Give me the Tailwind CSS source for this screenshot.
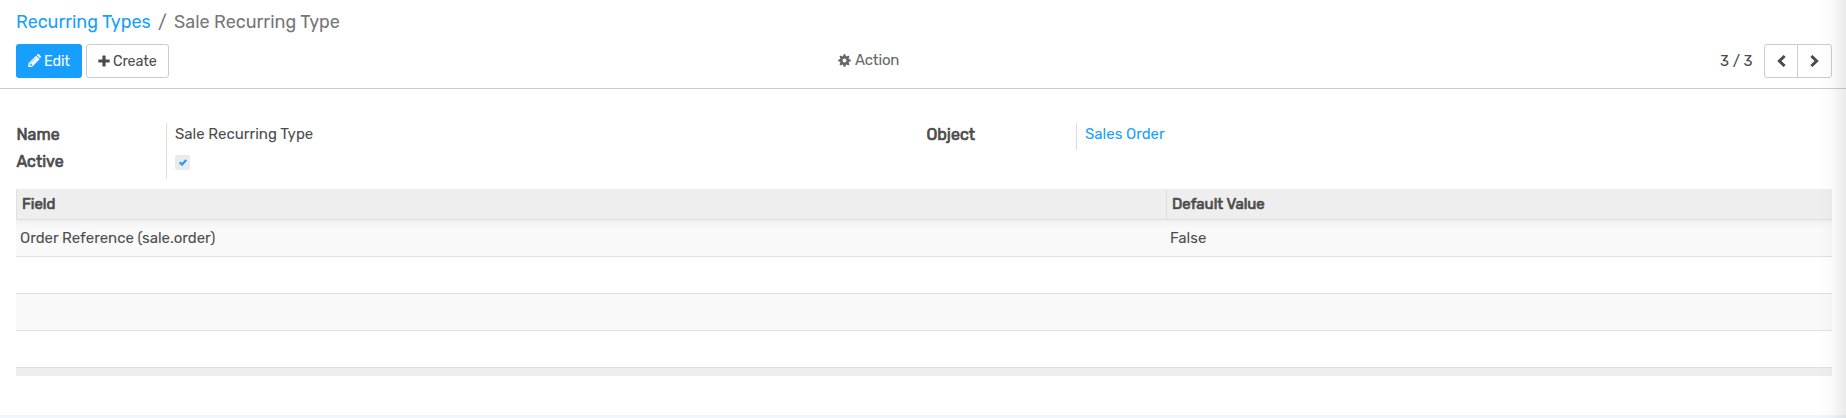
<!DOCTYPE html>
<html lang="en">
<head>
<meta charset="utf-8">
<title>Sale Recurring Type</title>
<script src="https://cdn.jsdelivr.net/npm/@tailwindcss/browser@4"></script>
</head>
<body class="relative h-[418px] overflow-hidden bg-white font-['Rubik','Roboto',sans-serif] text-[15px] leading-[22px] text-[#4c4c4c]">
<header class="h-[89px] border-b border-[#cccccc] px-4 pt-[11px]">
  <nav class="flex h-[33px] text-[18px] leading-[22px]">
    <a class="w-[142px] tracking-[-0.03px] text-[#169fff]">Recurring Types</a>
    <span class="w-4 text-[#777777]">/</span>
    <span class="text-[#777777]">Sale Recurring Type</span>
  </nav>
  <div class="grid h-[34px] grid-cols-[820px_1fr_auto]">
    <div class="flex gap-1">
      <button class="flex h-[34px] w-[66px] items-center rounded-[3px] bg-[#169fff] pl-3 text-[14.4px] tracking-[-0.15px] text-white">
        <svg class="mr-[3px] h-[14px] w-[13px]" viewBox="0 0 13 14" fill="currentColor"><path fill-rule="evenodd" d="M.3 9.4 8 1.7l3.6 3.6-7.7 7.7H.3zM1.5 10v.8h1.2V12h.9l.8-.8-2.100-2zM2.500 8.700l.4.4 5.300-5.300-.4-.4zM8.700 1l.8-.7q.7-.6 1.400 0l1.700 1.800q.6.7 0 1.400l-.8.8z"/></svg>
        <span class="pt-px">Edit</span>
      </button>
      <button class="flex h-[34px] w-[83px] items-center rounded-[3px] border border-[#cccccc] bg-white pl-[11px] text-[14.4px] tracking-[-0.15px]">
        <svg class="mr-[3px] h-3 w-3" viewBox="0 0 12 12" fill="currentColor"><path d="M5 .5h2q.6 0 .6.6v3.300h3.500q.6 0 .6.6v2q0 .6-.6.6H7.600v3.300q0 .6-.6.6H5q-.6 0-.6-.6V7.600H.9Q.3 7.600.3 7V5q0-.6.6-.6h3.500V1.100Q4.400.5 5 .5z"/></svg>
        <span class="pt-px">Create</span>
      </button>
    </div>
    <button class="flex h-8 items-center pl-[2px] text-[#666666]">
      <svg class="mr-1 h-[13px] w-[13px]" viewBox="0 0 13 13" fill="currentColor"><path fill-rule="evenodd" d="M5.500.3h2l.3 1.700.9.4L10.200 1.400l1.400 1.400-1 1.500.4.9 1.700.3v2l-1.700.3-.4.9 1 1.500-1.400 1.400-1.500-1-.9.4-.3 1.700h-2l-.3-1.700-.9-.4-1.500 1-1.400-1.400 1-1.500-.4-.9L.3 7.500v-2l1.700-.3.4-.9-1-1.500L2.800 1.400l1.500 1 .9-.4zM6.500 4.500a2 2 0 1 0 0 4 2 2 0 0 0 0-4z"/></svg>
      <span class="tracking-[-0.2px]">Action</span>
    </button>
    <div class="-mr-0.5 flex items-center">
      <span class="w-[44px]">3 / 3</span>
      <div class="flex">
        <button class="flex h-[34px] w-[34px] items-center justify-center rounded-l-[3px] border border-[#cccccc]"><svg class="h-3 w-[9px]" viewBox="0 0 9 12" fill="none" stroke="currentColor" stroke-width="3"><path d="M7.600 1 2.400 6l5.200 5"/></svg></button>
        <button class="-ml-px flex h-[34px] w-[35px] items-center justify-center rounded-r-[3px] border border-[#cccccc]"><svg class="h-3 w-[9px]" viewBox="0 0 9 12" fill="none" stroke="currentColor" stroke-width="3"><path d="M1.400 1l5.200 5-5.200 5"/></svg></button>
      </div>
    </div>
  </div>
</header>
<main class="mx-4 w-[1816px] pt-[34px]">
  <div class="grid h-[66px] grid-cols-[910px_1fr]">
    <div class="grid grid-cols-[150px_1fr]">
      <div class="pl-[0.5px] text-[16px] leading-[24px] [-webkit-text-stroke:0.7px_#4c4c4c]"><div class="h-[27px]">Name</div><div>Active</div></div>
      <div class="h-14 border-l border-[#dddddd] pl-2"><div class="h-8">Sale Recurring Type</div>
        <div class="flex h-[15px] w-[15px] items-center justify-center rounded-[2px] bg-[#ebebeb] text-[#169fff]"><svg class="h-[7px] w-2" viewBox="0 0 8 7" fill="none" stroke="currentColor" stroke-width="2.2"><path d="M.7 3.300 3.100 5.500 7.300 1"/></svg></div>
      </div>
    </div>
    <div class="grid grid-cols-[150px_1fr]">
      <div class="pl-[0.5px] text-[16px] leading-[24px] [-webkit-text-stroke:0.7px_#4c4c4c]">Object</div>
      <div class="h-[27px] border-l border-[#dddddd] pl-2 text-[#169fff]">Sales Order</div>
    </div>
  </div>
  <div class="grid h-[31px] grid-cols-[1150px_1fr] border-b border-[#dfdfdf] bg-[#eeeeee] leading-[30px] [-webkit-text-stroke:0.7px_#4c4c4c]">
    <div class="border-l border-[#dfdfdf] pl-[5px]">Field</div>
    <div class="border-l border-[#dfdfdf] pl-[5px]">Default Value</div>
  </div>
  <div class="grid h-[37px] grid-cols-[1150px_1fr] border-b border-[#dfdfe5] bg-linear-to-b from-[#f0f0f0] to-[#f9f9f9] to-[8px] leading-9">
    <div class="pl-1">Order Reference (sale.order)</div>
    <div class="pl-1">False</div>
  </div>
  <div class="h-[37px] border-b border-[#dfdfdf]"></div>
  <div class="h-[37px] border-b border-[#dfdfe5] bg-[#f9f9f9]"></div>
  <div class="h-[37px] border-b border-[#dfdfdf]"></div>
  <div class="h-2 bg-[#eeeeee]"></div>
</main>
<div class="mt-[39px] h-[3px] bg-[#f0f6fb]"></div>
<div class="absolute inset-y-0 right-0 w-7 bg-linear-to-r from-black/0 via-black/2 to-black/8"></div>
</body>
</html>
